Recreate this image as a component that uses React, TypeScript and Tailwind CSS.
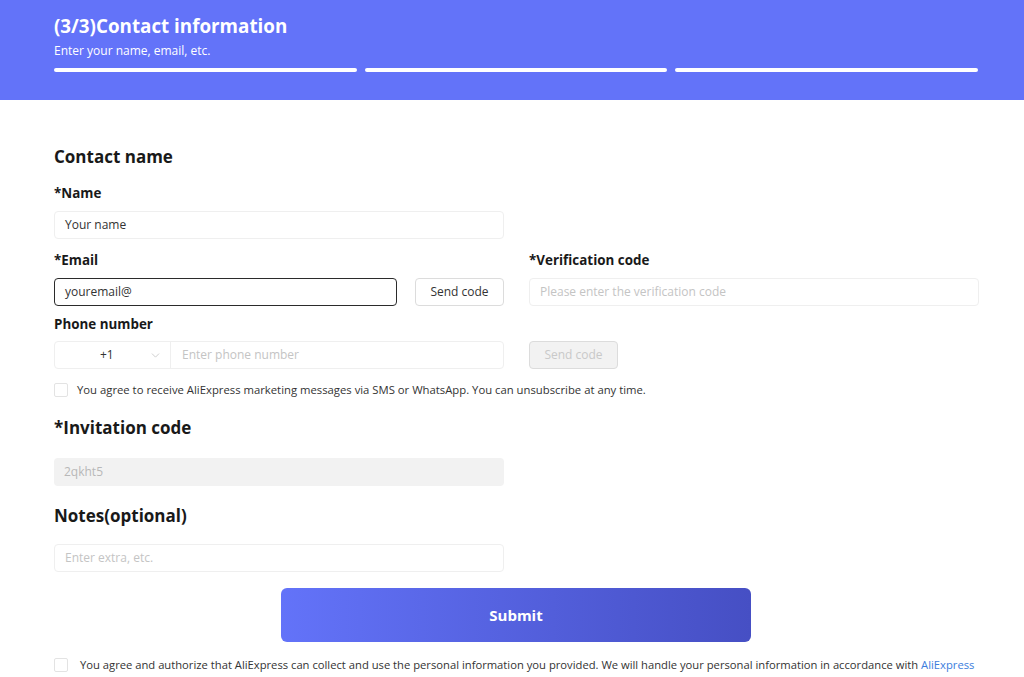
import { ChevronDown } from "lucide-react";

const font = "font-['Open_Sans','Lato',sans-serif]";

const Label = ({ children }: { children: React.ReactNode }) => (
  <p className="text-[13.4px] font-bold leading-[18px] text-[#191919]">{children}</p>
);

const Heading = ({ children }: { children: React.ReactNode }) => (
  <p className="text-[17px] font-bold leading-[22px] text-[#191919]">{children}</p>
);

const Field = ({
  placeholder,
  value,
  className = "",
}: {
  placeholder?: string;
  value?: string;
  className?: string;
}) => (
  <div
    className={`flex h-[28px] items-center rounded-[4px] border border-[#efefef] px-[10px] text-[12px] ${className}`}
  >
    {value ? (
      <span className="text-[#333]">{value}</span>
    ) : (
      <span className="text-[#c4c4c4]">{placeholder}</span>
    )}
  </div>
);

const Checkbox = () => (
  <span className="h-[14px] w-[14px] shrink-0 rounded-[2px] border border-[#e3e3e3] bg-white" />
);

const App = () => {
  return (
    <div className={`min-h-[677px] w-full bg-white ${font}`}>
      <div className="h-[100px] w-full bg-[#6373f9] pl-[54px] pr-[46px] pt-[14px]">
        <p className="text-[18.8px] font-bold leading-[24px] text-white">
          (3/3)Contact information
        </p>
        <p className="mt-[6px] text-[12px] leading-[14px] text-white">
          Enter your name, email, etc.
        </p>
        <div className="mt-[10px] grid grid-cols-3 gap-[8px]">
          <div className="h-[4px] rounded-full bg-white" />
          <div className="h-[4px] rounded-full bg-white" />
          <div className="h-[4px] rounded-full bg-white" />
        </div>
      </div>

      <div className="pl-[54px] pr-[46px] pt-[46px]">
        <Heading>Contact name</Heading>

        <div className="mt-[16px] w-[450px]">
          <Label>*Name</Label>
          <Field className="mt-[9px]" value="Your name" />
        </div>

        <div className="mt-[12px] grid grid-cols-[450px_450px] gap-x-[25px]">
          <div>
            <Label>*Email</Label>
            <div className="mt-[9px] flex gap-[18px]">
              <div className="flex h-[28px] flex-1 items-center rounded-[4px] border border-[#2b2b2b] px-[10px] text-[12px] text-[#333]">
                youremail@
              </div>
              <button className="h-[28px] w-[89px] rounded-[4px] border border-[#dcdcdc] bg-white text-[12px] text-[#333]">
                Send code
              </button>
            </div>
          </div>
          <div>
            <Label>*Verification code</Label>
            <Field className="mt-[9px]" placeholder="Please enter the verification code" />
          </div>

          <div className="mt-[9px]">
            <Label>Phone number</Label>
            <div className="mt-[8px] flex h-[28px] rounded-[4px] border border-[#efefef] text-[12px]">
              <div className="relative flex w-[116px] items-center border-r border-[#efefef]">
                <span className="ml-[45px] text-[#333]">+1</span>
                <ChevronDown
                  className="absolute right-[8px] top-[7px] h-[13px] w-[13px] text-[#c4c4c4]"
                  strokeWidth={1.5}
                />
              </div>
              <div className="flex items-center px-[11px] text-[#c4c4c4]">Enter phone number</div>
            </div>
          </div>
          <div className="mt-[9px] flex items-end">
            <button className="h-[28px] w-[89px] rounded-[4px] border border-[#dcdcdc] bg-[#f2f2f2] text-[12px] text-[#c9c9c9]">
              Send code
            </button>
          </div>
        </div>

        <div className="mt-[13px] flex items-center gap-[9px]">
          <Checkbox />
          <span className="text-[11.3px] text-[#333]">
            You agree to receive AliExpress marketing messages via SMS or WhatsApp. You can
            unsubscribe at any time.
          </span>
        </div>

        <div className="mt-[18px] w-[450px]">
          <Heading>*Invitation code</Heading>
          <div className="mt-[19px] flex h-[28px] items-center rounded-[4px] bg-[#f2f2f2] px-[10px] text-[12px] text-[#b8b8b8]">
            2qkht5
          </div>
        </div>

        <div className="mt-[19px] w-[450px]">
          <Heading>Notes(optional)</Heading>
          <Field className="mt-[17px]" placeholder="Enter extra, etc." />
        </div>

        <div className="mt-[16px] flex justify-center">
          <button className="h-[54px] w-[470px] rounded-[6px] bg-gradient-to-r from-[#6373f9] to-[#464fc4] text-[15px] font-bold text-white">
            Submit
          </button>
        </div>

        <div className="mt-[15px] flex items-center gap-[12px]">
          <Checkbox />
          <span className="whitespace-nowrap text-[11.23px] text-[#333]">
            You agree and authorize that AliExpress can collect and use the personal information
            you provided. We will handle your personal information in accordance with{" "}
            <span className="text-[#3b7ddd]">AliExpress</span>
          </span>
        </div>
      </div>
    </div>
  );
};

export default App;
